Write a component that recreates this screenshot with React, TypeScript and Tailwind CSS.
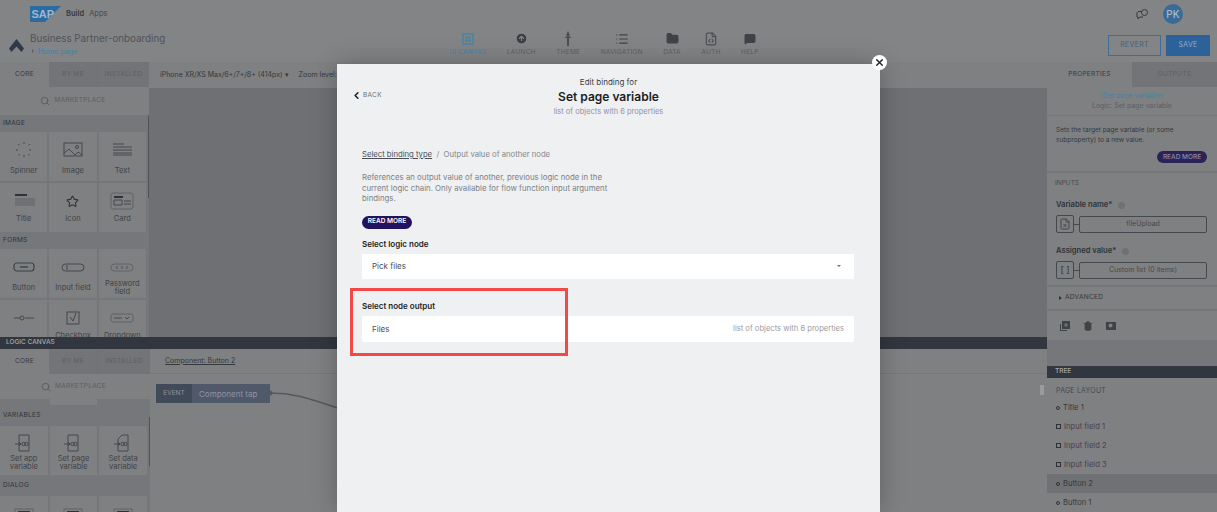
import React from 'react';
import { ChevronLeft, Search, Star, FileCode, FileX, Folder, List, MessageSquare, ArrowUpCircle, Trash2, X } from 'lucide-react';

type Tile = { label: string; icon: React.ReactNode };

const stroke = { fill: 'none', stroke: '#3f4247', strokeWidth: 0.9 };

function Glyph({ children }: { children: React.ReactNode }) {
  return (
    <svg width="24" height="18" viewBox="0 0 24 18" {...stroke}>
      {children}
    </svg>
  );
}

const spinner = (
  <Glyph>
    <path d="M12 1v3M12 14v3M4 9h3M17 9h3M6 3l2 2M16 13l2 2M18 3l-2 2M8 13l-2 2" strokeDasharray="2 1" />
  </Glyph>
);
const imageIcon = (
  <Glyph>
    <rect x="3" y="2" width="18" height="13" />
    <path d="M3 12l5-4 6 6 3-3 4 3" />
    <circle cx="16" cy="6" r="1.5" />
  </Glyph>
);
const textIcon = (
  <Glyph>
    <path d="M3 3h11M3 6h19M3 9h19M3 12h19M3 14h19" />
  </Glyph>
);
const titleIcon = (
  <Glyph>
    <path d="M3 3h12" strokeWidth="2" stroke="#2f3237" />
    <path d="M3 7h20M3 9h20M3 11h20M3 13h20" stroke="#5d5f63" />
  </Glyph>
);
const cardIcon = (
  <Glyph>
    <rect x="1" y="1" width="22" height="16" rx="2" stroke="#5d5f63" />
    <path d="M4 5h9" strokeWidth="2" stroke="#2f3237" />
    <path d="M4 8h8v5H4zM14 9h7M14 12h7" />
  </Glyph>
);
const buttonIcon = (
  <Glyph>
    <rect x="2" y="5" width="20" height="8" rx="3" strokeWidth="1.2" />
    <path d="M8 9h8" strokeWidth="1.400" />
  </Glyph>
);
const inputIcon = (
  <Glyph>
    <rect x="1" y="6" width="22" height="7" rx="3.5" />
    <path d="M6 7v5" />
  </Glyph>
);
const passwordIcon = (
  <Glyph>
    <rect x="1" y="6" width="22" height="7" rx="3.5" stroke="#5d5f63" />
    <path d="M6 8l2 3M8 8l-2 3M11 8l2 3M13 8l-2 3M16 8l2 3M18 8l-2 3" stroke="#5d5f63" />
  </Glyph>
);
const sliderIcon = (
  <Glyph>
    <path d="M2 9h6M13 9h9" />
    <circle cx="10" cy="9" r="2" />
  </Glyph>
);
const checkIcon = (
  <Glyph>
    <rect x="6" y="3" width="12" height="12" />
    <path d="M9 8l3 4 3-8" />
  </Glyph>
);
const dropdownIcon = (
  <Glyph>
    <rect x="1" y="5" width="22" height="8" rx="2" stroke="#5d5f63" />
    <path d="M4 9h8M15 8l2 2 2-2" />
  </Glyph>
);
const dialogIcon = (
  <Glyph>
    <rect x="3" y="4" width="18" height="14" stroke="#5d5f63" />
    <path d="M6 7h12" strokeWidth="2" stroke="#2f3237" />
  </Glyph>
);

function VarIcon({ fold }: { fold?: boolean }) {
  return (
    <svg width="24" height="20" viewBox="0 0 24 20" {...stroke}>
      <path d={fold ? 'M11 1h6v16H7V5z' : 'M7 1h10v16H7z'} />
      <path d="M3 10h6M9 10l-2-2M9 10l-2 2" />
      <circle cx="11.500" cy="10" r="1.700" />
      <circle cx="14.500" cy="10" r="1.700" />
    </svg>
  );
}

const uiTiles: { section: string; tiles: Tile[] }[] = [
  {
    section: 'IMAGE',
    tiles: [
      { label: 'Spinner', icon: spinner },
      { label: 'Image', icon: imageIcon },
      { label: 'Text', icon: textIcon },
      { label: 'Title', icon: titleIcon },
      { label: 'Icon', icon: <Star size={13} color="#2f3237" /> },
      { label: 'Card', icon: cardIcon },
    ],
  },
  {
    section: 'FORMS',
    tiles: [
      { label: 'Button', icon: buttonIcon },
      { label: 'Input field', icon: inputIcon },
      { label: 'Password field', icon: passwordIcon },
      { label: '', icon: sliderIcon },
      { label: 'Checkbox', icon: checkIcon },
      { label: 'Dropdown', icon: dropdownIcon },
    ],
  },
];

const nav = [
  { label: 'UI CANVAS', active: true, icon: <svg width="12" height="12" viewBox="0 0 12 12" fill="none" stroke="#3d84ab" strokeWidth="1.2"><rect x="1" y="1" width="10" height="10" /><path d="M4 4h1v1H4zM7 4h1v1H7zM4 7h1v1H4zM7 7h1v1H7z" /></svg> },
  { label: 'LAUNCH', icon: <ArrowUpCircle size={13} color="#85878a" fill="#3b3e43" /> },
  { label: 'THEME', icon: <svg width="8" height="16" viewBox="0 0 8 16" fill="#4c4f54"><path d="M4 0l1.500 3v3H7v1H5v8H3V7H1V6h1.500V3z" /></svg> },
  { label: 'NAVIGATION', icon: <List size={14} color="#3f4247" /> },
  { label: 'DATA', icon: <Folder size={13} color="#3f4247" fill="#3f4247" /> },
  { label: 'AUTH', icon: <FileCode size={14} color="#4c4f54" /> },
  { label: 'HELP', icon: <MessageSquare size={12} color="#3f4247" fill="#3f4247" /> },
];

function Tabs() {
  return (
    <div className="flex h-[25px] shrink-0 text-[6.500px] tracking-[0.3px]">
      <div className="flex w-[49px] items-center justify-center bg-[#7f8082] text-[#35383c]">CORE</div>
      <div className="flex w-[49px] items-center justify-center border-r border-[#6f7174] bg-[#727477] text-[#5d5f63]">BY ME</div>
      <div className="flex flex-1 items-center justify-center bg-[#727477] text-[#5d5f63]">INSTALLED</div>
    </div>
  );
}

function Marketplace({ compact }: { compact?: boolean }) {
  return (
    <div className={`flex shrink-0 items-center justify-center gap-1 bg-[#7f8082] pr-[3px] text-[6.500px] tracking-[0.3px] text-[#5d5f63] ${compact ? 'h-[25px]' : 'h-[28px]'}`}>
      <Search size={10} color="#55585c" />
      MARKETPLACE
    </div>
  );
}

function Section({ label, tall }: { label: string; tall?: boolean }) {
  return <div className={`flex shrink-0 items-center bg-[#75777a] pl-[3px] text-[6.500px] tracking-[0.3px] text-[#2f3237] ${tall ? 'h-[21px]' : 'h-[17px] pt-[1px]'}`}>{label}</div>;
}

function TileGrid({ tiles, twoLine }: { tiles: Tile[]; twoLine?: boolean }) {
  return (
    <div className="grid grid-cols-3 gap-[2px] bg-[#75777a] pr-[3px]">
      {tiles.map((t, i) => (
        <div key={i} className={`flex h-[49px] flex-col items-center bg-[#7f8082] ${twoLine ? 'pt-[8px]' : 'pt-[9px]'}`}>
          <div className={`flex items-center justify-center ${twoLine ? 'h-[20px]' : 'h-[18px]'}`}>{t.icon}</div>
          <div className={`flex h-[16px] w-[46px] items-center justify-center text-center text-[7.500px] leading-[8px] text-[#3f4247] ${twoLine ? 'mt-[1px]' : i > 2 ? 'mt-[1px]' : 'mt-[4px]'}`}>{t.label}</div>
        </div>
      ))}
    </div>
  );
}

function TreeRow({ label, square, selected }: { label: string; square?: boolean; selected?: boolean }) {
  return (
    <div className={`flex h-[19px] items-center gap-[3px] pl-[9px] text-[7.600px] ${selected ? 'bg-[#6f7174]' : ''} ${square ? 'text-[#4a3f4d]' : 'text-[#35383c]'}`}>
      <span className={square ? 'h-[5px] w-[5px] border border-[#2f3237]' : 'h-[4px] w-[4px] rounded-full border border-[#2f3237]'} />
      {label}
    </div>
  );
}

function BoundField({ label, value, icon }: { label: string; value: string; icon: React.ReactNode }) {
  return (
    <div className="pl-[9px] pr-[10px]">
      <div className="flex h-[10px] items-center gap-[6px] text-[7.600px] font-semibold text-[#2f3237]">
        {label}
        <span className="h-[7px] w-[7px] rounded-full bg-[#6f7174]" />
      </div>
      <div className="mt-[5px] flex items-center">
        <div className="flex h-[18px] w-[18px] items-center justify-center rounded-[2px] border border-[#45484d]">{icon}</div>
        <div className="h-px w-[5px] bg-[#45484d]" />
        <div className="flex h-[17px] flex-1 items-center justify-center rounded-[2px] border border-[#45484d] text-[7px] text-[#45484d]">{value}</div>
      </div>
    </div>
  );
}

export default function App() {
  return (
    <div className="relative h-[512px] w-[1217px] overflow-hidden bg-[#838486] font-['Inter',sans-serif]">
      {/* top bar */}
      <div className="flex h-[28px] items-center justify-between pl-[30px] pr-[34px]">
        <div className="flex items-center">
          <svg width="31" height="16" viewBox="0 0 31 16">
            <path d="M0 0h31L15 16H0z" fill="#2c6ba0" />
            <text x="1.500" y="12" fontSize="11" fontWeight="700" fill="#9db8cf" fontFamily="Liberation Sans">SAP</text>
          </svg>
          <span className="ml-[5px] text-[7.500px] font-semibold text-[#35383c]">Build</span>
          <span className="ml-[5px] text-[7.500px] text-[#45484d]">Apps</span>
        </div>
        <div className="flex items-center gap-[15px]">
          <svg width="12" height="11" viewBox="0 0 12 11" fill="none" stroke="#35383c">
            <path d="M2 2.500h4M1 3v5h1v2l2-2h3" />
            <circle cx="8.500" cy="3.500" r="3" />
          </svg>
          <div className="flex h-[20px] w-[20px] items-center justify-center rounded-full bg-[#3a6a96] text-[10px] font-medium text-[#a3bdd3]">PK</div>
        </div>
      </div>

      {/* app header */}
      <div className="flex h-[34px] items-center pl-[9px]">
        <svg width="15" height="13" viewBox="0 0 15 13">
          <path d="M7.500 0L15 9.500 12.500 13 7.500 7.500 2.500 13 0 9.500z" fill="#2f3a46" />
        </svg>
        <div className="-mt-[3px] ml-[6px] w-[150px]">
          <div className="whitespace-nowrap text-[9.800px] leading-[13px] text-[#505358]">Business Partner-onboarding</div>
          <div className="mt-[2px] flex items-center gap-[4px] pl-[2px] text-[7.200px] leading-[9px] text-[#3d84ab]">
            <span className="h-0 w-0 border-y-[2px] border-l-[2px] border-y-transparent border-l-[#5d5f63]" />
            Home page
          </div>
        </div>
        <div className="-mt-[2px] ml-[269px] flex items-center gap-[20.500px]">
          {nav.map((n) => (
            <div key={n.label} className={`flex flex-col items-center text-[6.500px] tracking-[0.25px] ${n.active ? 'text-[#3d84ab]' : 'text-[#5d5f63]'}`}>
              <div className="flex h-[16px] items-center">{n.icon}</div>
              <div className="mt-[1px]">{n.label}</div>
            </div>
          ))}
        </div>
        <div className="ml-auto flex gap-[5px] pr-[7px]">
          <div className="flex h-[21px] w-[53px] items-center justify-center border border-[#3d6d99] text-[7px] tracking-[0.3px] text-[#45607a]">REVERT</div>
          <div className="flex h-[21px] w-[44px] items-center justify-center bg-[#2c619a] text-[7px] tracking-[0.3px] text-[#93afc9]">SAVE</div>
        </div>
      </div>

      {/* workspace */}
      <div className="flex h-[450px]">
        <div className="flex w-[1047px] flex-col">
          <div className="flex h-[275px] overflow-hidden">
            <div className="relative flex w-[149px] shrink-0 flex-col overflow-hidden bg-[#75777a]">
              <Tabs />
              <Marketplace />
              {uiTiles.map((g) => (
                <React.Fragment key={g.section}>
                  <Section label={g.section} />
                  <TileGrid tiles={g.tiles} />
                </React.Fragment>
              ))}
              <div className="absolute right-0 top-[53px] h-[83px] w-px bg-[#4f5154]" />
            </div>
            <div className="flex flex-1 flex-col">
              <div className="flex h-[26px] items-center gap-[10px] bg-[#7f8082] pl-[11px] text-[7px] text-[#35383c]">
                <span>iPhone XR/XS Max/6+/7+/8+ (414px) ▾</span>
                <span>Zoom level:</span>
              </div>
              <div className="flex-1 bg-[#6f7073]" />
            </div>
          </div>
          <div className="flex h-[12px] shrink-0 items-center bg-[#32373f] pl-[6px] text-[6.500px] font-medium text-[#a5a8ad]">LOGIC CANVAS</div>
          <div className="flex flex-1 overflow-hidden">
            <div className="relative flex w-[150px] shrink-0 flex-col overflow-hidden bg-[#75777a]">
              <Tabs />
              <Marketplace compact />
              <div className="flex h-[6px] shrink-0 justify-center pr-[3px]">
                <div className="h-full w-[47px] bg-[#7f8082]" />
              </div>
              <Section label="VARIABLES" tall />
              <TileGrid
                twoLine
                tiles={[
                  { label: 'Set app variable', icon: <VarIcon /> },
                  { label: 'Set page variable', icon: <VarIcon /> },
                  { label: 'Set data variable', icon: <VarIcon fold /> },
                ]}
              />
              <Section label="DIALOG" tall />
              <TileGrid
                tiles={[
                  { label: '', icon: dialogIcon },
                  { label: '', icon: dialogIcon },
                  { label: '', icon: dialogIcon },
                ]}
              />
              <div className="absolute right-0 top-[68px] h-[49px] w-px bg-[#4f5154]" />
            </div>
            <div className="flex flex-1 flex-col bg-[#7f8082]">
              <div className="flex h-[25px] items-center border-b border-[#75777a] pl-[15px] text-[7px] text-[#35383c] underline">Component: Button 2</div>
              <div className="relative flex-1">
                <div className="ml-[6px] mt-[10px] flex h-[19px] w-[114px] items-center bg-[#50596a] text-[#8f949e]">
                  <div className="flex h-full w-[36px] items-center justify-center bg-[#414a58] text-[6.500px]">EVENT</div>
                  <div className="pl-[7px] text-[8px]">Component tap</div>
                </div>
                <svg className="absolute left-[118px] top-[9px]" width="70" height="26" viewBox="0 0 70 26" fill="none">
                  <circle cx="2" cy="10" r="2.500" fill="#50596a" />
                  <path d="M2 10c25 0 40 6 68 15" stroke="#55585c" strokeWidth="1.500" />
                </svg>
                <div className="absolute right-[3px] top-[11px] h-[10px] w-[4px] bg-[#9a9b9d]" />
              </div>
            </div>
          </div>
        </div>

        {/* right panel */}
        <div className="flex w-[170px] shrink-0 flex-col bg-[#75777a]">
          <div className="flex h-[25px] shrink-0 text-[6.500px] tracking-[0.3px]">
            <div className="flex w-[85px] items-center justify-center bg-[#7f8082] text-[#35383c]">PROPERTIES</div>
            <div className="flex flex-1 items-center justify-center bg-[#727477] text-[#5d5f63]">OUTPUTS</div>
          </div>
          <div className="flex h-[28px] shrink-0 flex-col items-center justify-center bg-[#7f8082] text-[7px] leading-[10px]">
            <span className="text-[#3d84ab]">(Set page variable)</span>
            <span className="text-[#5d5f63]">Logic: Set page variable</span>
          </div>
          <div className="mt-[1px] h-[55px] shrink-0 bg-[#7f8082] pl-[9px] pr-[10px] pt-[9px] text-[6.500px] leading-[10px] text-[#35383c]">
            Sets the target page variable (or some subproperty) to a new value.
            <div className="mt-[6px] flex justify-end">
              <span className="flex h-[12px] w-[50px] items-center justify-center rounded-full bg-[#2b2357] text-[6.500px] font-medium text-[#8f8ba8]">READ MORE</span>
            </div>
          </div>
          <div className="mt-[2px] h-[112px] shrink-0 bg-[#7f8082]">
            <div className="px-[8px] pt-[5px] text-[6.500px] leading-[10px] text-[#45484d]">INPUTS</div>
            <div className="mt-[12px] flex flex-col gap-[13px]">
              <BoundField label="Variable name*" value="fileUpload" icon={<FileX size={12} color="#45484d" />} />
              <BoundField label="Assigned value*" value="Custom list (0 items)" icon={<span className="text-[9px] text-[#35383c]">[ ]</span>} />
            </div>
          </div>
          <div className="mt-[2px] flex h-[22px] shrink-0 items-center gap-[3px] bg-[#7f8082] pl-[12px] text-[6.500px] tracking-[0.3px] text-[#35383c]">
            <span className="h-0 w-0 border-y-[2.500px] border-l-[3px] border-y-transparent border-l-[#2f3237]" />
            ADVANCED
          </div>
          <div className="mt-[2px] flex h-[29px] shrink-0 items-center gap-[13px] bg-[#7f8082] pl-[13px]">
            <svg width="10" height="10" viewBox="0 0 10 10" fill="#3f4247">
              <path d="M0 3h1v6h6v1H0z" />
              <path d="M2 0h8v8H2zM5.500 2v1.500H4v1h1.500V6h1V4.500H8v-1H6.500V2z" fillRule="evenodd" />
            </svg>
            <Trash2 size={10} color="#3f4247" fill="#3f4247" />
            <svg width="10" height="8" viewBox="0 0 10 8" fill="#3f4247">
              <path d="M0 0h10v8H0zM4.500 1.500a2 2 0 100 4 2 2 0 000-4zM6 5l2 2" fillRule="evenodd" />
            </svg>
          </div>
          <div className="h-[26px] shrink-0" />
          <div className="flex h-[12px] shrink-0 items-center bg-[#32373f] pl-[8px] text-[6.500px] font-medium text-[#a5a8ad]">TREE</div>
          <div className="flex-1 bg-[#7f8082]">
            <div className="h-[20px] pl-[9px] pt-[8px] text-[7px] leading-[10px] tracking-[0.2px] text-[#45484d]">PAGE LAYOUT</div>
            <TreeRow label="Title 1" />
            <TreeRow label="Input field 1" square />
            <TreeRow label="Input field 2" square />
            <TreeRow label="Input field 3" square />
            <TreeRow label="Button 2" selected />
            <TreeRow label="Button 1" />
          </div>
        </div>
      </div>

      {/* binding dialog */}
      <div className="absolute bottom-0 left-[337px] top-[64px] w-[543px] bg-[#eff0f2] shadow-[0_0_24px_rgba(0,0,0,0.25)]">
        <div className="absolute left-[14px] top-[26px] flex items-center gap-[1px] text-[6.500px] tracking-[0.3px] text-[#6a6d72]">
          <ChevronLeft size={11} strokeWidth={3.500} color="#1f2328" />
          <span>BACK</span>
        </div>
        <div className="flex flex-col items-center pt-[13px]">
          <div className="text-[8px] leading-[10px] text-[#3c3f44]">Edit binding for</div>
          <div className="mt-[2px] text-[12px] font-semibold leading-[16px] text-[#1b1e22]">Set page variable</div>
          <div className="mt-[2px] text-[7.500px] leading-[10px] text-[#8d93a8]">list of objects with 6 properties</div>
        </div>
        <div className="px-[25px] pt-[33px]">
          <div className="text-[7.700px] leading-[10px]">
            <span className="text-[#4a4d52] underline">Select binding type</span>
            <span className="text-[#85888d]">&nbsp; / &nbsp;Output value of another node</span>
          </div>
          <p className="mt-[12px] w-[250px] text-[7.800px] leading-[10.500px] text-[#7d8085]">
            References an output value of another, previous logic node in the current logic chain. Only available for flow function input argument bindings.
          </p>
          <div className="mt-[12px] flex h-[13px] w-[50px] items-center justify-center rounded-full bg-[#23125f] text-[6.500px] font-semibold text-white">READ MORE</div>
          <div className="mt-[10px] text-[8px] font-semibold leading-[10px] text-[#1b1e22]">Select logic node</div>
          <div className="mt-[5px] flex h-[25px] w-[492px] items-center justify-between bg-white pl-[10px] pr-[13px] text-[8px] text-[#4a4d52]">
            Pick files
            <span className="h-0 w-0 border-x-[2.500px] border-t-[2.500px] border-x-transparent border-t-[#6a6d72]" />
          </div>
          <div className="mt-[22px] text-[8px] font-semibold leading-[10px] text-[#1b1e22]">Select node output</div>
          <div className="mt-[5px] flex h-[26px] w-[492px] items-center justify-between bg-white px-[10px] text-[8px] text-[#4a4d52]">
            Files
            <span className="text-[7.600px] text-[#9a9da2]">list of objects with 6 properties</span>
          </div>
        </div>
      </div>

      {/* close button and callout sit over the dialog */}
      <div className="absolute left-[872px] top-[55px] flex h-[15px] w-[15px] items-center justify-center rounded-full bg-white">
        <X size={11} strokeWidth={3} color="#20242a" />
      </div>
      <div className="absolute left-[350px] top-[288px] h-[68px] w-[218px] border-[3px] border-[#f24848]" />
    </div>
  );
}
